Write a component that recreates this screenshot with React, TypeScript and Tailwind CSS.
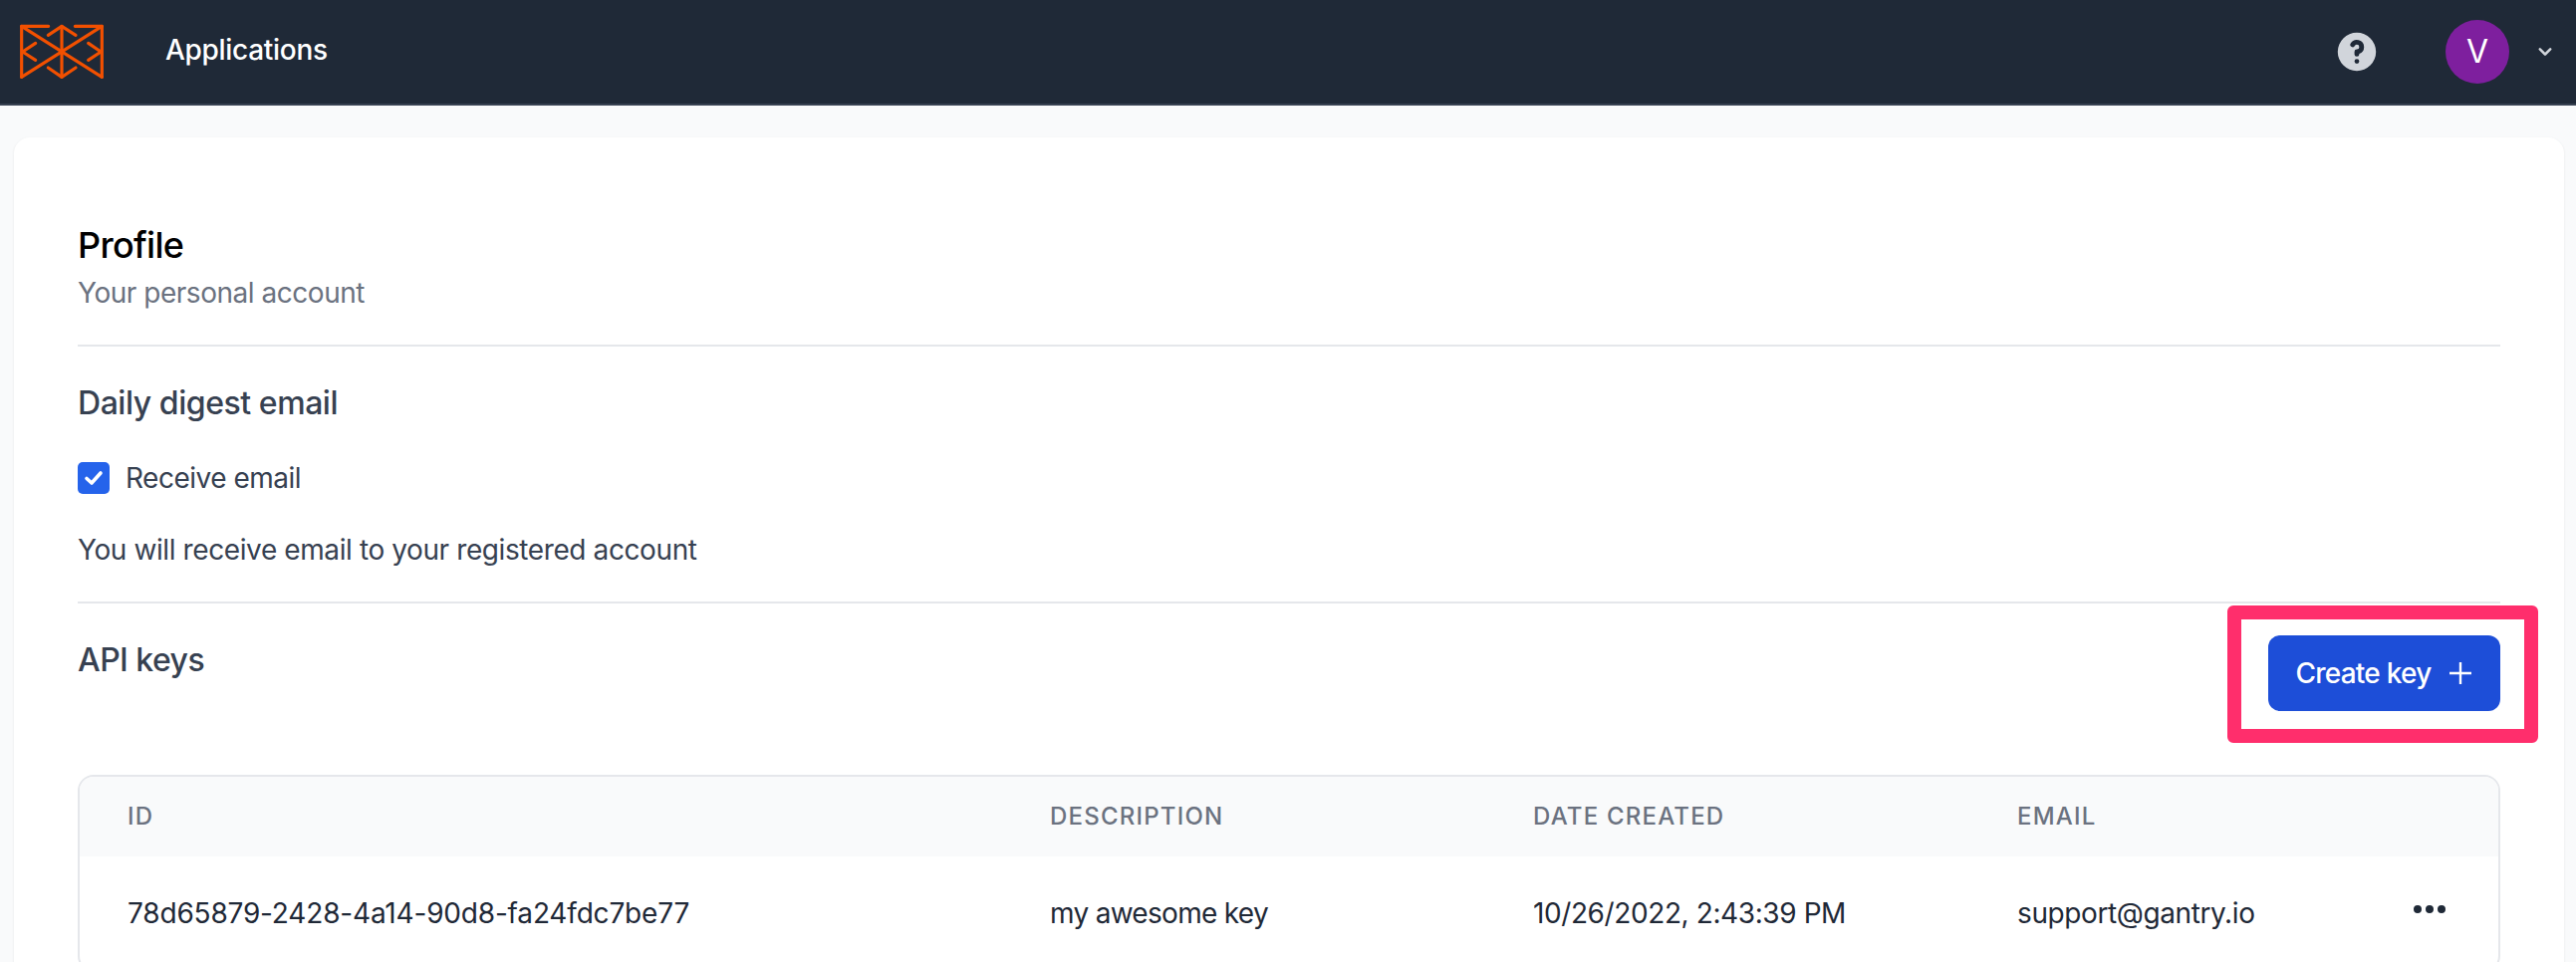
import React from "react";
import { HiQuestionMarkCircle, HiChevronDown, HiDotsHorizontal } from "react-icons/hi";

const Logo = () => (
  <svg width="84" height="56" viewBox="60 66 252 168" fill="none" stroke="#f25000" strokeWidth="9.5" strokeLinecap="round" strokeLinejoin="round">
    <path d="M146 73H65V226" />
    <path d="M226 73H307V226" />
    <path d="M65 73L307 226" />
    <path d="M307 73L65 226" />
    <path d="M186 73V226" />
    <path d="M145 100L186 73L228 100" />
    <path d="M145 198L186 226L228 198" />
    <path d="M107 124L68 150L107 175" />
    <path d="M266 124L304 150L266 175" />
  </svg>
);

export default function App() {
  return (
    <div className="h-[966px] overflow-hidden bg-[#f9fafb] font-['Inter',sans-serif]">
      <header className="flex h-[106px] items-center justify-between border-b-2 border-[#374151] bg-[#1f2937] pl-5 pr-[18px]">
        <div className="flex items-center gap-[63px]">
          <Logo />
          <span className="mb-[4px] -ml-px text-[28px] font-medium tracking-[-0.3px] text-white">Applications</span>
        </div>
        <div className="flex items-center">
          <HiQuestionMarkCircle size={48} className="text-[#d1d5db]" />
          <div className="ml-[65px] flex h-16 w-16 items-center justify-center rounded-full bg-[#7e1f9e] text-[32px] text-white">V</div>
          <HiChevronDown size={26} className="ml-[23px] text-[#d1d5db]" />
        </div>
      </header>

      <main className="ml-[14px] mr-3 mt-8 h-[900px] rounded-[16px] bg-white px-16 pt-20 shadow-[0_1px_3px_rgba(0,0,0,0.08)]">
        <h1 className="text-[36px] font-medium leading-[56px] tracking-[-0.7px] text-black">Profile</h1>
        <p className="text-[28px] leading-[40px] tracking-[-0.47px] text-[#6b7280]">Your personal account</p>
        <hr className="mt-[32px] border-t-2 border-[#e5e7eb]" />

        <h2 className="mt-[33px] text-[32px] font-medium leading-[48px] tracking-[-0.45px] text-[#374151]">Daily digest email</h2>
        <label className="mt-[31px] flex items-center gap-4">
          <span className="flex h-8 w-8 items-center justify-center rounded-[5px] bg-[#2563eb]">
            <svg width="20" height="20" viewBox="0 0 20 20" fill="none" stroke="white" strokeWidth="3.6" strokeLinecap="round" strokeLinejoin="round">
              <path d="M3 10.5L8 15L17 5" />
            </svg>
          </span>
          <span className="text-[28px] leading-[40px] tracking-[-0.5px] text-[#374151]">Receive email</span>
        </label>
        <p className="mt-[32px] text-[28px] leading-[40px] tracking-[-0.4px] text-[#374151]">You will receive email to your registered account</p>
        <hr className="mt-[32px] border-t-2 border-[#e5e7eb]" />

        <div className="mt-[32px] flex items-start justify-between">
          <h2 className="mt-[1px] text-[32px] font-medium leading-[48px] tracking-[-0.55px] text-[#374151]">API keys</h2>
          <div className="relative">
            <button className="flex h-[76px] w-[233px] items-center justify-center gap-[18px] rounded-[12px] bg-[#1d4ed8] pr-[2px] text-[28px] font-medium tracking-[-0.75px] text-white">
              Create key
              <svg width="22" height="22" viewBox="0 0 22 22" fill="none" stroke="white" strokeWidth="2.4" strokeLinecap="round">
                <path d="M11 0.5V21.5M0.5 11H21.5" />
              </svg>
            </button>
            <div className="absolute -left-[41px] -right-[38px] -top-[30px] -bottom-[32px] rounded-[6px] border-[14px] border-[#ff2e6c]" />
          </div>
        </div>

        <div className="mt-16 overflow-hidden rounded-[16px] border-2 border-[#e5e7eb]">
          <div className="grid h-[80px] grid-cols-[926px_485px_486px_1fr] items-center bg-[#f9fafb] pl-12 text-[24px] font-medium tracking-[1.2px] text-[#6b7280]">
            <span>ID</span>
            <span>DESCRIPTION</span>
            <span>DATE CREATED</span>
            <span>EMAIL</span>
          </div>
          <div className="grid h-[114px] grid-cols-[926px_485px_486px_1fr] items-center pl-12 text-[28px] tracking-[-0.4px] text-[#1f2937]">
            <span className="tracking-[-0.18px]">78d65879-2428-4a14-90d8-fa24fdc7be77</span>
            <span className="tracking-[-0.7px]">my awesome key</span>
            <span>10/26/2022, 2:43:39 PM</span>
            <div className="flex items-center justify-between pr-[49px]">
              <span>support@gantry.io</span>
              <HiDotsHorizontal size={40} className="-mt-2 text-[#1f2937]" />
            </div>
          </div>
        </div>
      </main>
    </div>
  );
}
